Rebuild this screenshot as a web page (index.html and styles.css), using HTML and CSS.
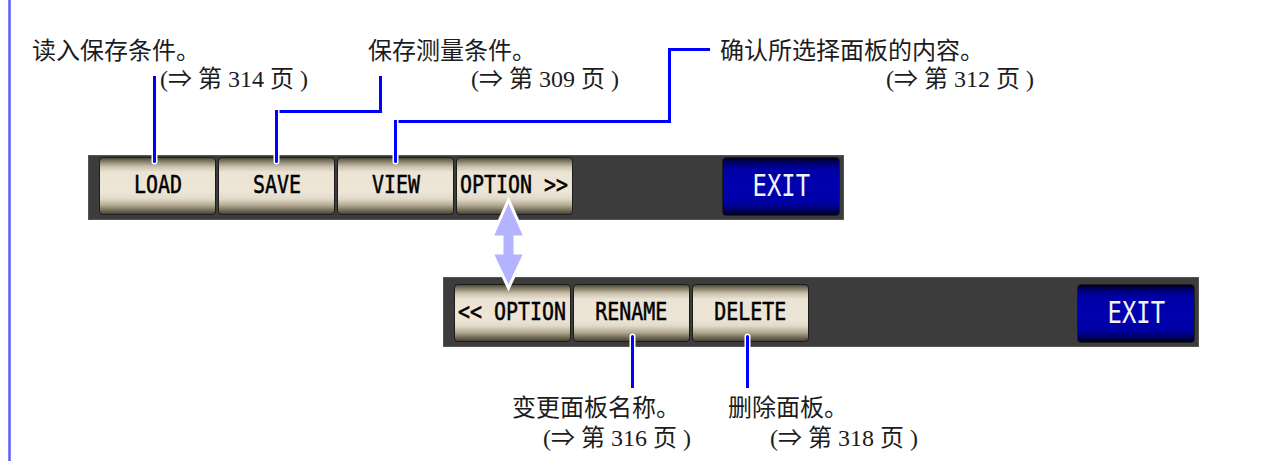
FILE: index.html
```html
<!DOCTYPE html>
<html lang="zh-CN">
<head>
<meta charset="utf-8">
<title>面板操作</title>
<link rel="stylesheet" href="styles.css">
</head>
<body>
<div class="page">
  <div class="bar bar-main">
    <div class="btn"><span class="cap">LOAD</span></div>
    <div class="btn"><span class="cap">SAVE</span></div>
    <div class="btn"><span class="cap">VIEW</span></div>
    <div class="btn"><span class="cap">OPTION &gt;&gt;</span></div>
    <div class="btn exit"><span class="cap">EXIT</span></div>
  </div>
  <div class="bar bar-option">
    <div class="btn"><span class="cap">&lt;&lt; OPTION</span></div>
    <div class="btn"><span class="cap">RENAME</span></div>
    <div class="btn"><span class="cap">DELETE</span></div>
    <div class="btn exit"><span class="cap">EXIT</span></div>
  </div>

  <div class="note note-load">
    <div>读入保存条件。</div>
    <div class="ref ref-load">(⇒ 第 314 页 )</div>
  </div>
  <div class="note note-save">
    <div>保存测量条件。</div>
    <div class="ref ref-save">(⇒ 第 309 页 )</div>
  </div>
  <div class="note note-view">
    <div>确认所选择面板的内容。</div>
    <div class="ref ref-view">(⇒ 第 312 页 )</div>
  </div>
  <div class="note note-low note-rename">
    <div>变更面板名称。</div>
    <div class="ref ref-rename">(⇒ 第 316 页 )</div>
  </div>
  <div class="note note-low note-delete">
    <div>删除面板。</div>
    <div class="ref ref-delete">(⇒ 第 318 页 )</div>
  </div>

  <div class="lead v end-b l-load"></div>
  <div class="lead v l-save-1"></div>
  <div class="lead h l-save-2"></div>
  <div class="lead v end-b l-save-3"></div>
  <div class="lead h l-view-1"></div>
  <div class="lead v l-view-2"></div>
  <div class="lead h l-view-3"></div>
  <div class="lead v end-b l-view-4"></div>
  <div class="lead v end-t l-rename"></div>
  <div class="lead v end-t l-delete"></div>

  <svg class="swap" width="41" height="96" viewBox="0 0 41 96" aria-hidden="true">
    <polygon points="20.5,4 4,41 14,41 14,57 4,57 20.5,92 37,57 27,57 27,41 37,41" fill="#b3b3ff" stroke="#ffffff" stroke-width="3" stroke-linejoin="miter"/>
  </svg>
</div>
</body>
</html>
```

FILE: styles.css
```css
html, body {
  margin: 0;
  padding: 0;
  background: #ffffff;
}

.page {
  position: relative;
  width: 1271px;
  height: 461px;
  box-sizing: border-box;
  padding-top: 155px;
  overflow: hidden;
}

.page::before {
  content: "";
  position: absolute;
  left: 8px;
  top: 0;
  bottom: 0;
  width: 3px;
  background: linear-gradient(to right, #9a9aff, #5c5cff 50%, #9a9aff);
}

.bar {
  box-sizing: border-box;
  width: 756px;
  display: flex;
  align-items: flex-start;
  gap: 2px;
  background: #3c3c3c;
  border: 1px solid #555555;
  padding-left: 10px;
  padding-right: 3px;
}

.bar-main {
  margin-left: 88px;
  height: 65px;
  padding-top: 1px;
}

.bar-option {
  margin-left: 443px;
  margin-top: 57px;
  height: 70px;
  padding-top: 6px;
}

.btn {
  box-sizing: border-box;
  width: 117px;
  height: 58px;
  border: 1px solid #1c1c1c;
  border-radius: 4px;
  display: flex;
  align-items: center;
  justify-content: center;
  padding-bottom: 2px;
  background: linear-gradient(to bottom,
    #524a3a 0%,
    #857c68 6%,
    #c8bfab 15%,
    #ebe4d4 25%,
    #ede6d7 60%,
    #e2dac9 73%,
    #b0a690 85%,
    #6a6150 95%,
    #4a4334 100%);
  color: #000000;
  font-family: "DejaVu Sans Mono", "Liberation Mono", monospace;
  font-size: 24px;
  line-height: 24px;
  -webkit-text-stroke: 0.5px #000000;
  white-space: nowrap;
}

.cap {
  display: inline-block;
  transform: scaleX(0.83);
  transform-origin: center;
}

.btn.exit {
  width: 118px;
  height: 59px;
  margin-left: auto;
  background: linear-gradient(to bottom,
    #00001a 0%,
    #000070 9%,
    #0000a6 20%,
    #0000b0 50%,
    #0000a6 78%,
    #000070 90%,
    #00001a 100%);
  color: #f2f2f2;
  -webkit-text-stroke: 0;
  font-size: 31px;
  line-height: 31px;
}

.btn.exit .cap {
  transform: scaleX(0.77);
}

.note {
  position: absolute;
  font-family: "Liberation Serif", "Noto Sans CJK SC", serif;
  font-size: 24px;
  line-height: 28px;
  color: #1c1c1c;
  white-space: nowrap;
}

.note-low {
  line-height: 30px;
}

.note-load { left: 32px; top: 37px; }
.ref-load { margin-left: 128px; }

.note-save { left: 368px; top: 37px; }
.ref-save { margin-left: 103px; }

.note-view { left: 720px; top: 37px; }
.ref-view { margin-left: 166px; }

.note-rename { left: 512px; top: 393px; }
.ref-rename { margin-left: 31px; }

.note-delete { left: 728px; top: 393px; }
.ref-delete { margin-left: 42px; }

.lead {
  position: absolute;
  background: #0000ff;
}

.lead.v { width: 3px; }
.lead.h { height: 3px; }

.lead.end-b {
  border-radius: 0 0 2px 2px;
  box-shadow: 0 0 0 1.5px #ffffff;
}

.lead.end-t {
  border-radius: 2px 2px 0 0;
  box-shadow: 0 0 0 1.5px #ffffff;
}

.l-load { left: 153px; top: 76px; height: 87px; }

.l-save-1 { left: 379px; top: 76px; height: 37px; }
.l-save-2 { left: 275px; top: 110px; width: 107px; }
.l-save-3 { left: 275px; top: 110px; height: 53px; }

.l-view-1 { left: 668px; top: 48px; width: 42px; }
.l-view-2 { left: 668px; top: 48px; height: 75px; }
.l-view-3 { left: 394px; top: 120px; width: 277px; }
.l-view-4 { left: 394px; top: 120px; height: 43px; }

.l-rename { left: 631px; top: 335px; height: 53px; }
.l-delete { left: 746px; top: 335px; height: 53px; }

.swap {
  position: absolute;
  left: 488px;
  top: 196px;
  display: block;
}
```
